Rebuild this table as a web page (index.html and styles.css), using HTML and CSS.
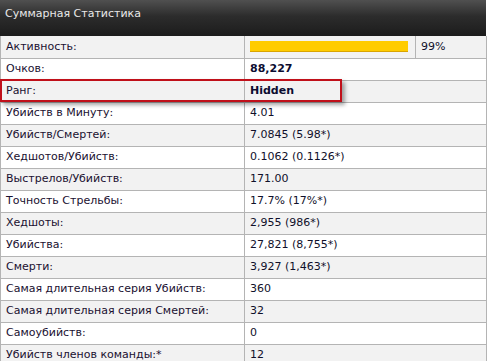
FILE: index.html
```html
<!DOCTYPE html>
<html>
<head>
<meta charset="utf-8">
<link rel="stylesheet" href="styles.css">
</head>
<body>
<div class="wrap">
  <div class="head">Суммарная Статистика</div>
  <table class="stats">
    <colgroup><col class="c1"><col class="c2"><col class="c3"></colgroup>
    <tr class="odd"><td>Активность:</td><td><div class="bar"><div class="fill" style="width:100%"></div></div></td><td>99%</td></tr>
    <tr><td>Очков:</td><td colspan="2" class="b">88,227</td></tr>
    <tr class="odd"><td>Ранг:</td><td colspan="2" class="b">Hidden</td></tr>
    <tr><td>Убийств в Минуту:</td><td colspan="2">4.01</td></tr>
    <tr class="odd"><td>Убийств/Смертей:</td><td colspan="2">7.0845 (5.98*)</td></tr>
    <tr><td>Хедшотов/Убийств:</td><td colspan="2">0.1062 (0.1126*)</td></tr>
    <tr class="odd"><td>Выстрелов/Убийств:</td><td colspan="2">171.00</td></tr>
    <tr><td>Точность Стрельбы:</td><td colspan="2">17.7% (17%*)</td></tr>
    <tr class="odd"><td>Хедшоты:</td><td colspan="2">2,955 (986*)</td></tr>
    <tr><td>Убийства:</td><td colspan="2">27,821 (8,755*)</td></tr>
    <tr class="odd"><td>Смерти:</td><td colspan="2">3,927 (1,463*)</td></tr>
    <tr><td>Самая длительная серия Убийств:</td><td colspan="2">360</td></tr>
    <tr class="odd"><td>Самая длительная серия Смертей:</td><td colspan="2">32</td></tr>
    <tr><td>Самоубийств:</td><td colspan="2">0</td></tr>
    <tr class="odd"><td>Убийств членов команды:*</td><td colspan="2">12</td></tr>
  </table>
  <div class="mark"></div>
</div>
</body>
</html>
```
FILE: styles.css
```css
html, body { margin: 0; padding: 0; background: #fff; overflow: hidden; }
.wrap { position: relative; width: 486px; font-family: "DejaVu Sans", Verdana, sans-serif; font-size: 11px; }
.head {
  height: 36px; box-sizing: border-box; padding: 6px 0 0 5px;
  background: linear-gradient(#505050, #2c2c2c 45%, #1c1c1c);
  color: #e8e8e8; font-size: 11px; line-height: 15px;
}
.stats { border-collapse: collapse; width: 486px; table-layout: fixed; }
.c1 { width: 244px; }
.c2 { width: 171px; }
.c3 { width: 71px; }
.stats td {
  height: 22px; box-sizing: border-box; padding: 0 0 0 5px;
  border: 1px solid #b4b4b4; border-top: 0; color: #10102a; line-height: 20px;
  white-space: nowrap; overflow: hidden; background: #fff;
}
.stats tr.odd td { background: #f2f2f2; }
.stats td:first-child { color: #1a1030; }
.stats td.b { font-weight: bold; color: #0c0c30; }
.bar { height: 11px; margin-right: 7px; }
.fill { height: 10px; background: #ffcc00; border-bottom: 1px solid #d9a400; }
.mark {
  position: absolute; left: 0; top: 79px; width: 342px; height: 23px; box-sizing: border-box;
  border: 2px solid #c0101a; box-shadow: 3px 3px 4px rgba(0,0,0,0.35);
}
```
